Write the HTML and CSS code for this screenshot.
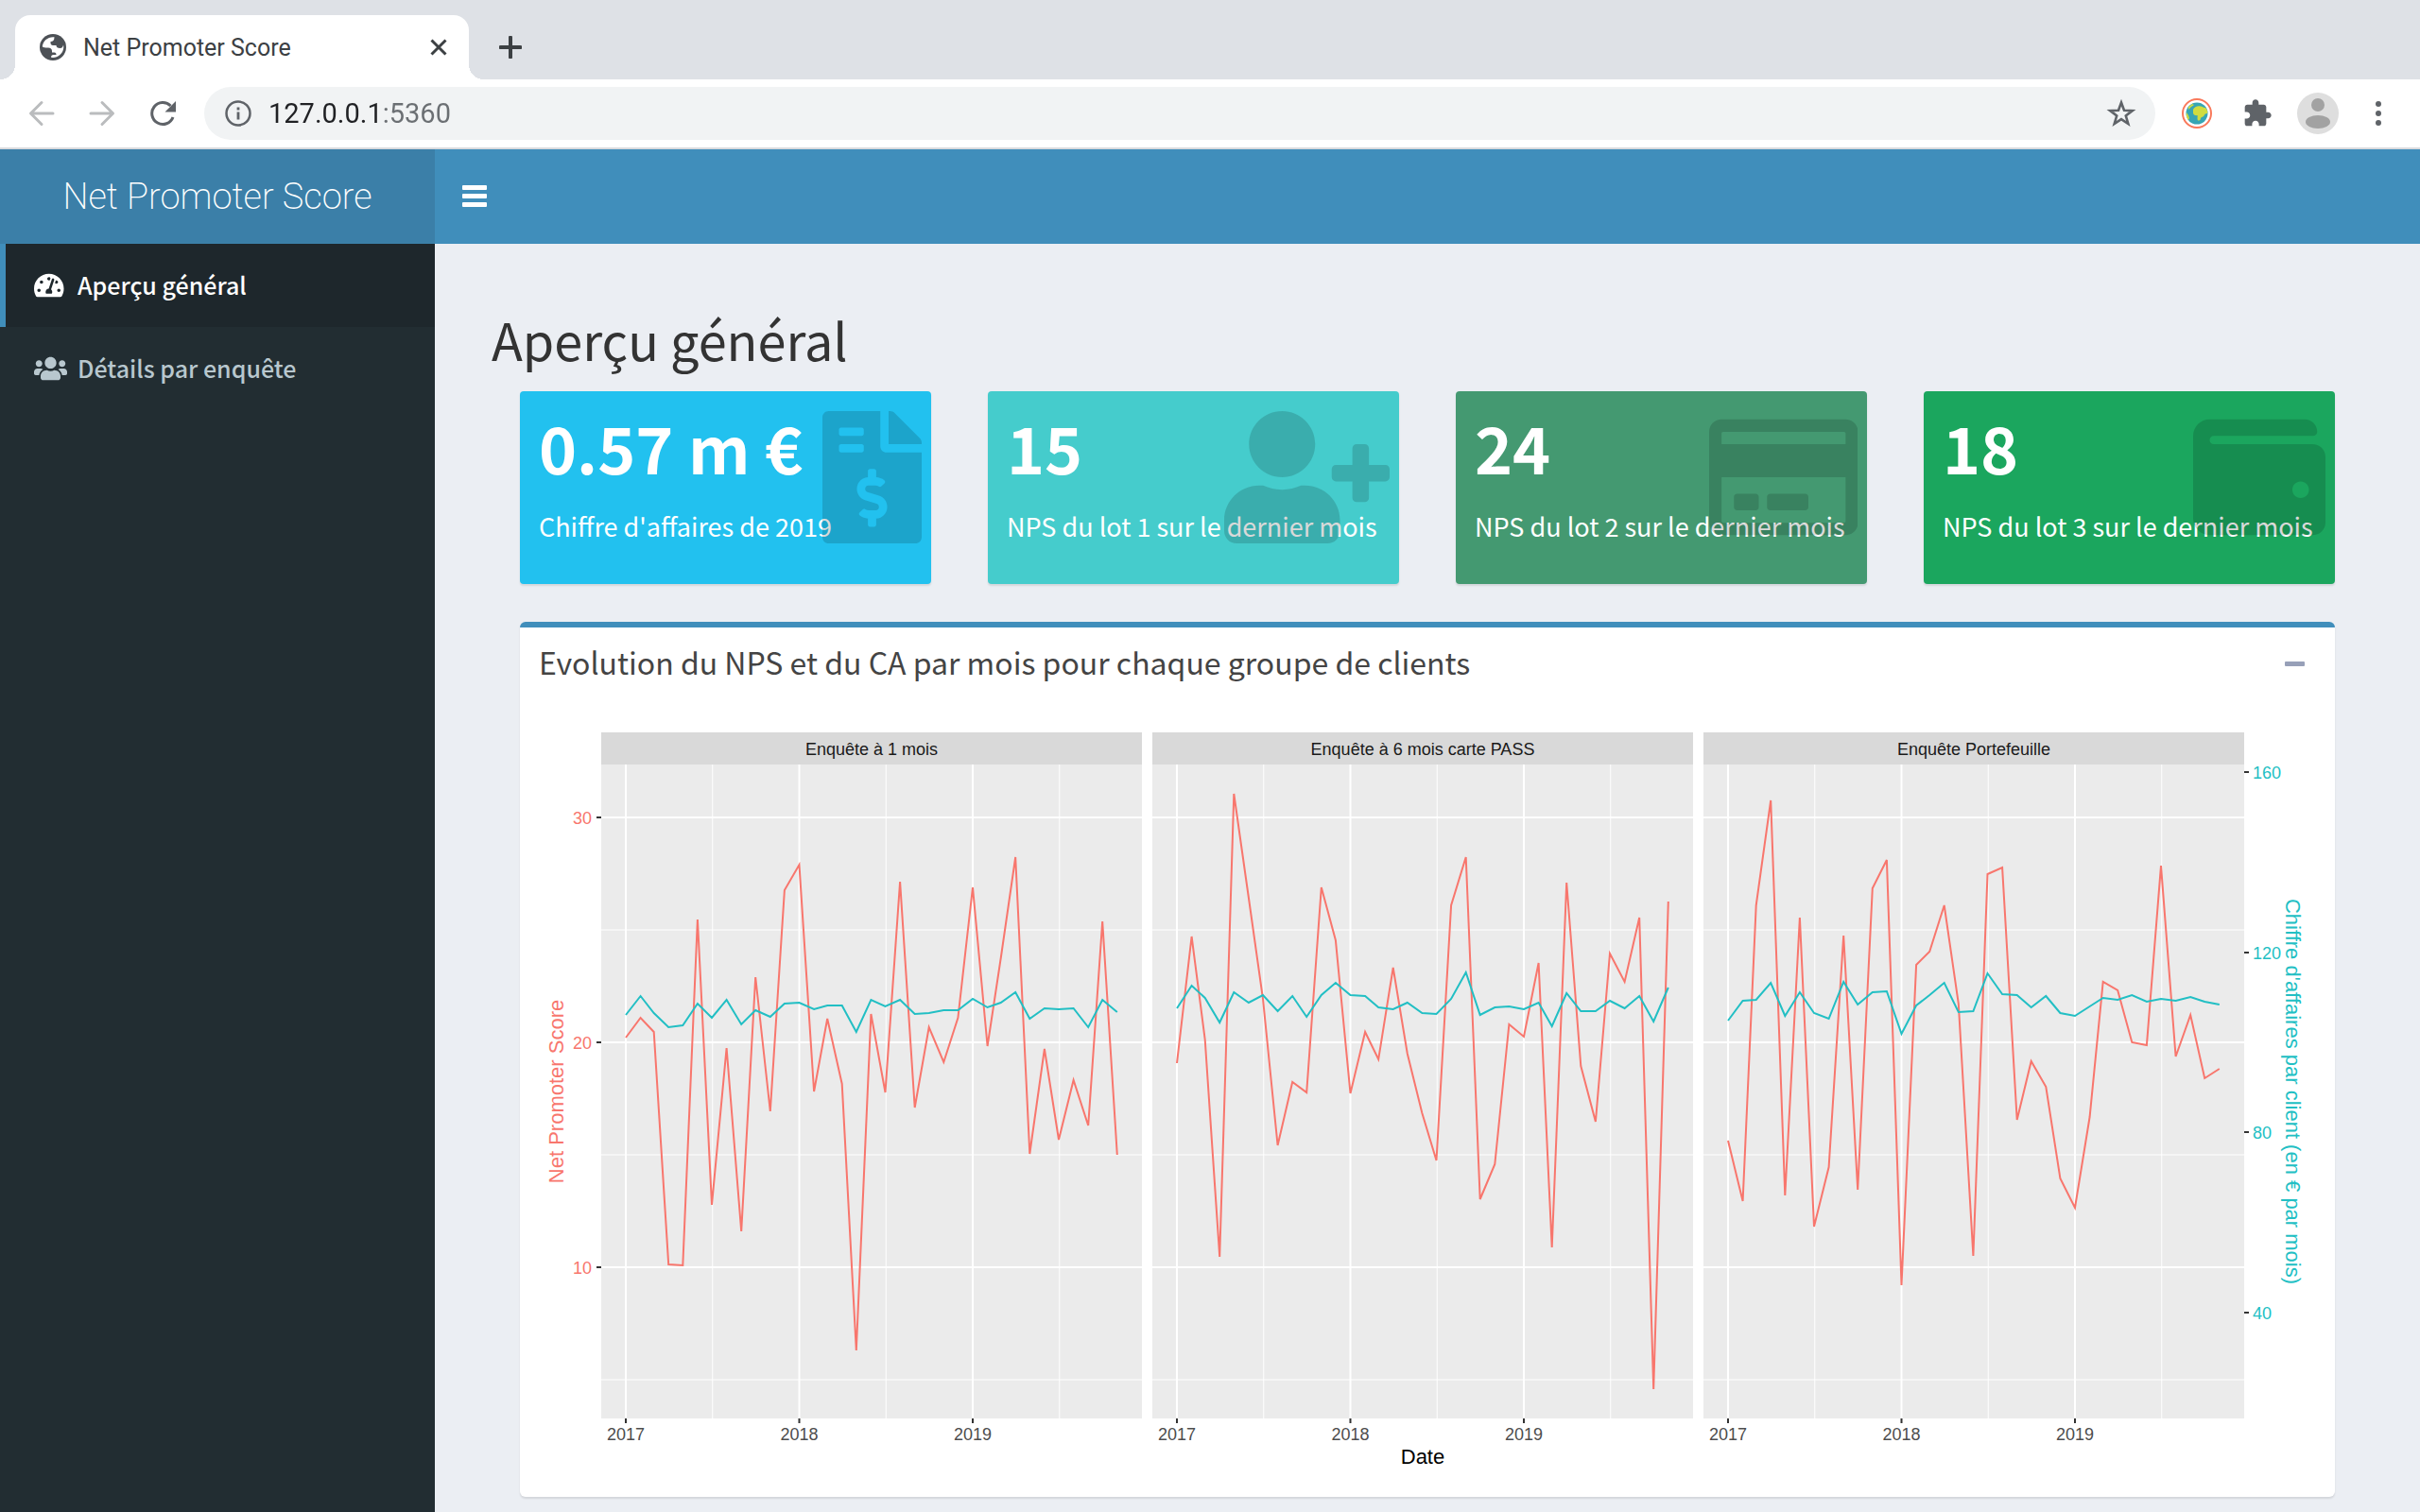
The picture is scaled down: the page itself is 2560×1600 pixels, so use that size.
FILE: index.html
```html
<!DOCTYPE html>
<html lang="fr">
<head>
<meta charset="utf-8">
<title>Net Promoter Score</title>
<link rel="stylesheet" href="styles.css">
</head>
<body>
<div class="browser">
  <div class="tabstrip">
    <div class="tab">
      <svg class="tab-icon" viewBox="0 0 28 28" aria-hidden="true"><circle cx="14" cy="14" r="14" fill="#4d5156"/><path fill="#fff" d="M15.500 3.200C9 2.500 3.500 7 2.800 13.200c1.400 1.400 3.500 1.300 6.200 1.300 2.500 0 4 1.500 4 3.500v1.500h2.500c1.500 0 2 1 2 2.500h-3c-1.500 0-2.500 1-2.500 2.800 6.500 1 12.500-3.600 13.200-9.800.2-1.500 0-2.500-.2-3.500-.5 2.500-1.500 3.500-3.500 3.500-2.500 0-4-1-4-3h-3.500c-1.500 0-2.500-1-2.500-2.500V8c2.500 0 4-1.500 4-4.800z"/></svg>
      <span class="tab-title">Net Promoter Score</span>
      <button class="icon-button" aria-label="Fermer l'onglet"><svg width="20" height="20" viewBox="0 0 20 20"><path d="M2.500 2.500l15 15M17.500 2.500l-15 15" stroke="#3c4043" stroke-width="3"/></svg></button>
    </div>
    <button class="icon-button" aria-label="Nouvel onglet"><svg width="24" height="24" viewBox="0 0 24 24"><path d="M12 1.500v21M1.500 12h21" stroke="#3c4043" stroke-width="4" stroke-linecap="round"/></svg></button>
  </div>
  <div class="toolbar">
    <div class="nav-buttons">
      <button class="icon-button" aria-label="Précédent"><svg width="28" height="28" viewBox="0 0 28 28" fill="none" stroke="#babcbe" stroke-width="3" stroke-linecap="round" stroke-linejoin="round"><path d="M26 14H3M14 2.500L2.500 14 14 25.500"/></svg></button>
      <button class="icon-button" aria-label="Suivant"><svg width="28" height="28" viewBox="0 0 28 28" fill="none" stroke="#babcbe" stroke-width="3" stroke-linecap="round" stroke-linejoin="round"><path d="M2 14h23M14 2.500L25.500 14 14 25.500"/></svg></button>
      <button class="icon-button" aria-label="Actualiser"><svg width="28" height="28" viewBox="0 0 28 28"><path d="M25 18A11.500 11.500 0 1 1 22.500 6" fill="none" stroke="#5f6368" stroke-width="3"/><path d="M28 1v11.500H16.500z" fill="#5f6368"/></svg></button>
    </div>
    <div class="omnibox">
      <svg width="28" height="28" viewBox="0 0 28 28" aria-hidden="true"><circle cx="14" cy="14" r="12.500" fill="none" stroke="#5f6368" stroke-width="2.500"/><path d="M14 12.500v8M14 7.500v3" stroke="#5f6368" stroke-width="2.800"/></svg>
      <input class="url" type="text" value="127.0.0.1:5360" aria-label="Adresse">
      <button class="icon-button" aria-label="Ajouter aux favoris"><svg width="32" height="32" viewBox="0 0 32 32"><path d="M16 4.500l3 8.300 8.800.3-7 5.400 2.500 8.500-7.300-4.900L8.700 27l2.500-8.500-7-5.400 8.800-.3z" fill="none" stroke="#5f6368" stroke-width="2.600"/></svg></button>
    </div>
    <div class="extensions">
      <button class="icon-button" aria-label="Ecosia"><svg width="32" height="32" viewBox="0 0 32 32"><circle cx="16" cy="16" r="15" fill="#fff" stroke="#f9795b" stroke-width="2"/><circle cx="16" cy="16" r="11.500" fill="#36a5b4"/><path fill="#cfdc40" d="M12 12c1-3 5-4.500 8-3.500 2 0 3 2 5 1.500 2 2 2.500 4 2 6-2 0-3 1-3.500 2.500s-3 1-3.500 2.500 0 3-3 2.500c-1-2 0-4-.500-5.500-2 .500-4.500-.500-4.500-2.500zM7 9l4-3 2 1-3 2-3 3zM5 15l2 3 1 3-1 2c-2-2-2.500-5-2-8z"/></svg></button>
      <button class="icon-button" aria-label="Extensions"><svg width="32" height="32" viewBox="0 0 24 24"><path fill="#5f6368" d="M20.500 11H19V7c0-1.100-.900-2-2-2h-4V3.500C13 2.120 11.880 1 10.500 1S8 2.120 8 3.500V5H4c-1.100 0-1.990.900-1.990 2v3.800H3.500c1.490 0 2.700 1.210 2.700 2.700s-1.210 2.700-2.700 2.700H2V20c0 1.100.900 2 2 2h3.800v-1.500c0-1.490 1.210-2.700 2.700-2.700 1.490 0 2.700 1.210 2.700 2.700V22H17c1.100 0 2-.900 2-2v-4h1.500c1.380 0 2.500-1.120 2.500-2.500S21.880 11 20.500 11z"/></svg></button>
      <button class="icon-button profile" aria-label="Profil"><svg width="44" height="44" viewBox="0 0 44 44"><circle cx="22" cy="22" r="22" fill="#dedede"/><circle cx="22" cy="13" r="7" fill="#a2a2a2"/><ellipse cx="22" cy="31" rx="13" ry="7" fill="#a2a2a2"/></svg></button>
      <button class="icon-button" aria-label="Menu"><svg width="32" height="32" viewBox="0 0 32 32" fill="#5f6368"><circle cx="16" cy="6" r="3"/><circle cx="16" cy="16" r="3"/><circle cx="16" cy="26" r="3"/></svg></button>
    </div>
  </div>
</div>

<div class="app">
  <header class="app-header">
    <a class="logo" href="#">Net Promoter Score</a>
    <button class="icon-button sidebar-toggle" aria-label="Afficher le menu"><svg width="26" height="30" viewBox="0 0 26 30" fill="#fff"><rect y="3" width="26" height="5" rx="1"/><rect y="12" width="26" height="5" rx="1"/><rect y="21" width="26" height="5" rx="1"/></svg></button>
  </header>
  <div class="app-body">
    <nav class="sidebar">
      <a class="menu-item menu-item-active" href="#apercu">
        <svg class="menu-icon" viewBox="0 0 640 512" preserveAspectRatio="xMinYMid" aria-hidden="true"><path d="M288 32C128.940 32 0 160.940 0 320c0 52.800 14.250 102.260 39.060 144.800 5.610 9.620 16.300 15.200 27.440 15.200h443c11.140 0 21.830-5.580 27.440-15.200C561.750 422.260 576 372.800 576 320c0-159.060-128.940-288-288-288zm0 64c14.710 0 26.580 10.130 30.320 23.650-1.110 2.260-2.640 4.230-3.450 6.670l-9.220 27.670c-5.130 3.490-10.970 6.010-17.640 6.010-17.670 0-32-14.330-32-32S270.330 96 288 96zM96 384c-17.670 0-32-14.330-32-32s14.330-32 32-32 32 14.330 32 32-14.330 32-32 32zm48-160c-17.670 0-32-14.330-32-32s14.330-32 32-32 32 14.330 32 32-14.330 32-32 32zm246.770-72.410l-61.330 184C343.130 347.330 352 364.540 352 384c0 11.720-3.380 22.550-8.880 32H232.880c-5.500-9.450-8.880-20.280-8.880-32 0-33.940 26.500-61.430 59.900-63.590l61.340-184.010c4.170-12.560 17.730-19.450 30.360-15.170 12.570 4.190 19.350 17.790 15.170 30.360zm14.660 57.200l15.520-46.550c3.470-1.290 7.130-2.230 11.050-2.230 17.670 0 32 14.330 32 32s-14.330 32-32 32c-11.380-.010-20.890-6.280-26.570-15.220zM480 384c-17.670 0-32-14.330-32-32s14.330-32 32-32 32 14.330 32 32-14.330 32-32 32z"/></svg>
        <span class="menu-text">Aperçu général</span>
      </a>
      <a class="menu-item" href="#details">
        <svg class="menu-icon" viewBox="0 0 640 512" preserveAspectRatio="xMinYMid" aria-hidden="true"><path d="M96 224c35.300 0 64-28.700 64-64s-28.700-64-64-64-64 28.700-64 64 28.700 64 64 64zm448 0c35.300 0 64-28.700 64-64s-28.700-64-64-64-64 28.700-64 64 28.700 64 64 64zm32 32h-64c-17.600 0-33.500 7.100-45.100 18.600 40.300 22.100 68.900 62 75.100 109.400h66c17.700 0 32-14.300 32-32v-32c0-35.300-28.700-64-64-64zm-256 0c61.900 0 112-50.100 112-112S381.900 32 320 32 208 82.100 208 144s50.100 112 112 112zm76.800 32h-8.300c-20.800 10-43.900 16-68.500 16s-47.600-6-68.500-16h-8.300C179.600 288 128 339.600 128 403.200V432c0 26.500 21.500 48 48 48h288c26.500 0 48-21.500 48-48v-28.800c0-63.600-51.600-115.200-115.200-115.200zm-223.700-13.400C161.500 263.100 145.600 256 128 256H64c-35.300 0-64 28.700-64 64v32c0 17.700 14.300 32 32 32h65.900c6.300-47.400 34.900-87.300 75.200-109.400z"/></svg>
        <span class="menu-text">Détails par enquête</span>
      </a>
    </nav>
    <main class="content">
      <h2 class="page-title">Aperçu général</h2>
      <div class="panels">
        <div class="cards">
          <section class="card card-aqua">
            <h3 class="card-value">0.57 m €</h3>
            <p class="card-label">Chiffre d'affaires de 2019</p>
            <svg class="card-icon" viewBox="0 0 384 512" aria-hidden="true"><path d="M377 105L279.100 7c-4.500-4.500-10.600-7-17-7H256v128h128v-6.100c0-6.300-2.500-12.400-7-16.900zm-153 31V0H24C10.700 0 0 10.700 0 24v464c0 13.300 10.700 24 24 24h336c13.300 0 24-10.700 24-24V160H248c-13.200 0-24-10.800-24-24zM64 72c0-4.420 3.580-8 8-8h80c4.420 0 8 3.580 8 8v16c0 4.420-3.580 8-8 8H72c-4.420 0-8-3.580-8-8V72zm0 80v-16c0-4.420 3.580-8 8-8h80c4.420 0 8 3.580 8 8v16c0 4.420-3.580 8-8 8H72c-4.420 0-8-3.580-8-8zm144 263.880V440c0 4.420-3.580 8-8 8h-16c-4.420 0-8-3.580-8-8v-24.290c-11.290-.580-22.270-4.520-31.370-11.350-3.900-2.930-4.100-8.770-.570-12.140l11.750-11.210c2.770-2.640 6.890-2.760 10.130-.730 3.870 2.420 8.260 3.720 12.820 3.720h28.110c6.500 0 11.800-5.920 11.800-13.190 0-5.950-3.610-11.190-8.770-12.730l-45-13.500c-18.590-5.580-31.580-23.420-31.580-43.390 0-24.520 19.050-44.440 42.670-45.070V232c0-4.420 3.580-8 8-8h16c4.420 0 8 3.580 8 8v24.290c11.290.580 22.270 4.510 31.370 11.350 3.900 2.930 4.100 8.770.570 12.140l-11.750 11.210c-2.770 2.640-6.890 2.760-10.130.730-3.870-2.430-8.260-3.720-12.820-3.720h-28.110c-6.500 0-11.800 5.920-11.800 13.190 0 5.950 3.610 11.190 8.770 12.730l45 13.500c18.590 5.580 31.580 23.420 31.580 43.390 0 24.530-19.050 44.440-42.670 45.070z"/></svg>
          </section>
          <section class="card card-teal">
            <h3 class="card-value">15</h3>
            <p class="card-label">NPS du lot 1 sur le dernier mois</p>
            <svg class="card-icon" viewBox="0 0 640 512" aria-hidden="true"><path d="M624 208h-64v-64c0-8.800-7.200-16-16-16h-32c-8.800 0-16 7.200-16 16v64h-64c-8.800 0-16 7.200-16 16v32c0 8.800 7.200 16 16 16h64v64c0 8.800 7.200 16 16 16h32c8.800 0 16-7.200 16-16v-64h64c8.800 0 16-7.200 16-16v-32c0-8.800-7.200-16-16-16zm-400 48c70.700 0 128-57.300 128-128S294.700 0 224 0 96 57.300 96 128s57.300 128 128 128zm89.600 32h-16.700c-22.200 10.200-46.900 16-72.900 16s-50.600-5.800-72.900-16h-16.700C60.200 288 0 348.200 0 422.400V464c0 26.500 21.500 48 48 48h352c26.500 0 48-21.500 48-48v-41.600c0-74.200-60.200-134.400-134.400-134.400z"/></svg>
          </section>
          <section class="card card-olive">
            <h3 class="card-value">24</h3>
            <p class="card-label">NPS du lot 2 sur le dernier mois</p>
            <svg class="card-icon" viewBox="0 0 576 512" aria-hidden="true"><path d="M527.900 32H48.100C21.500 32 0 53.500 0 80v352c0 26.500 21.500 48 48.100 48h479.800c26.600 0 48.100-21.500 48.100-48V80c0-26.500-21.500-48-48.100-48zM54.100 80h467.800c3.300 0 6 2.700 6 6v42H48.100V86c0-3.300 2.700-6 6-6zm467.800 352H54.100c-3.300 0-6-2.700-6-6V256h479.800v170c0 3.300-2.700 6-6 6zM192 332v40c0 6.600-5.400 12-12 12h-72c-6.600 0-12-5.400-12-12v-40c0-6.600 5.400-12 12-12h72c6.600 0 12 5.400 12 12zm192 0v40c0 6.600-5.400 12-12 12H236c-6.600 0-12-5.400-12-12v-40c0-6.600 5.400-12 12-12h136c6.600 0 12 5.400 12 12z"/></svg>
          </section>
          <section class="card card-green">
            <h3 class="card-value">18</h3>
            <p class="card-label">NPS du lot 3 sur le dernier mois</p>
            <svg class="card-icon" viewBox="0 0 512 512" aria-hidden="true"><path d="M461.200 128H80c-8.840 0-16-7.160-16-16s7.160-16 16-16h384c8.840 0 16-7.160 16-16 0-26.510-21.490-48-48-48H64C28.650 32 0 60.650 0 96v320c0 35.350 28.650 64 64 64h397.200c28.020 0 50.800-21.530 50.800-48V176c0-26.470-22.780-48-50.800-48zM416 336c-17.670 0-32-14.330-32-32s14.330-32 32-32 32 14.330 32 32-14.330 32-32 32z"/></svg>
          </section>
        </div>
        <section class="box">
          <div class="box-header">
            <h3 class="box-title">Evolution du NPS et du CA par mois pour chaque groupe de clients</h3>
            <button class="icon-button collapse" aria-label="Réduire"><svg width="21" height="5" viewBox="0 0 21 5"><rect width="21" height="5" rx="1" fill="#97a0b8"/></svg></button>
          </div>
          <div class="box-body">
            <svg id="plot" class="plot" viewBox="0 0 1880 800" role="img" aria-label="NPS et chiffre d'affaires par mois"></svg>
          </div>
        </section>
      </div>
    </main>
  </div>
</div>
<script src="plot.js"></script>
</body>
</html>
```
FILE: styles.css
```css
* {
  box-sizing: border-box;
}

body {
  margin: 0;
  min-height: 100vh;
  display: flex;
  flex-direction: column;
  font-family: "Noto Sans CJK SC", "Noto Sans", sans-serif;
  color: #333;
  background: #ebeef3;
}

h2, h3, p {
  margin: 0;
  font-weight: 400;
}

a {
  text-decoration: none;
}

svg {
  display: block;
}

.icon-button {
  display: flex;
  padding: 0;
  border: 0;
  background: none;
  cursor: pointer;
}

/* Browser frame */
.browser {
  font-family: Roboto, sans-serif;
  border-bottom: 2px solid #d9dadd;
}

.tabstrip {
  display: flex;
  align-items: center;
  gap: 32px;
  height: 84px;
  padding: 16px 16px 0;
  background: #dee1e6;
}

.tab {
  position: relative;
  display: flex;
  align-items: center;
  gap: 18px;
  width: 480px;
  height: 68px;
  padding: 0 22px 0 26px;
  border-radius: 16px 16px 0 0;
  background: #fff;
}

.tab::before,
.tab::after {
  content: "";
  position: absolute;
  bottom: 0;
  width: 16px;
  height: 16px;
}

.tab::before {
  right: 100%;
  background: radial-gradient(circle at 0 0, #dee1e6 16px, #fff 16px);
}

.tab::after {
  left: 100%;
  background: radial-gradient(circle at 100% 0, #dee1e6 16px, #fff 16px);
}

.tab-icon {
  width: 28px;
  height: 28px;
}

.tab-title {
  flex: 1;
  font-size: 25px;
  color: #3c4043;
}

.toolbar {
  display: flex;
  align-items: center;
  height: 72px;
  padding: 0 28px 0 30px;
  background: #fff;
}

.nav-buttons {
  display: flex;
  gap: 36px;
  margin-right: 30px;
}

.omnibox {
  flex: 1;
  display: flex;
  align-items: center;
  gap: 18px;
  height: 56px;
  padding: 0 20px 0 22px;
  border-radius: 28px;
  background: #f1f3f4;
}

.url {
  flex: 1;
  min-width: 0;
  padding: 0;
  border: 0;
  font: 29px/40px Roboto, sans-serif;
  color: transparent;
  background: linear-gradient(90deg, #202124 120px, #6b6f73 120px);
  background-clip: text;
}

.extensions {
  display: flex;
  align-items: center;
  gap: 32px;
  margin-left: 28px;
}

.profile {
  margin: 0 -6px;
}

/* Dashboard header */
.app {
  flex: 1;
  display: flex;
  flex-direction: column;
}

.app-header {
  display: flex;
  height: 100px;
  background: #408ebb;
}

.logo {
  width: 460px;
  font: 200 38px/100px Roboto, "Liberation Sans", sans-serif;
  text-align: center;
  color: #fff;
  background: #3b7fa8;
}

.sidebar-toggle {
  align-items: center;
  padding: 0 29px;
}

.app-body {
  flex: 1;
  display: flex;
}

/* Sidebar */
.sidebar {
  width: 460px;
  background: #222d32;
}

.menu-item {
  display: flex;
  align-items: center;
  gap: 10px;
  height: 88px;
  padding-left: 30px;
  border-left: 6px solid transparent;
  font-size: 25px;
  font-weight: 500;
  color: #b8c7ce;
}

.menu-item-active {
  color: #fff;
  background: #1e272c;
  border-left-color: #408ebb;
}

.menu-icon {
  width: 36px;
  height: 28px;
  fill: currentColor;
}

.menu-text {
  padding-bottom: 3px;
}

/* Content */
.content {
  flex: 1;
  min-width: 0;
  padding: 68px 60px 16px;
}

.page-title {
  margin-bottom: 22px;
  font-size: 54px;
  line-height: 66px;
}

.panels {
  display: flex;
  flex-direction: column;
  gap: 40px;
  padding: 0 30px;
}

.cards {
  display: grid;
  grid-template-columns: repeat(4, 1fr);
  gap: 60px;
}

.card {
  position: relative;
  padding: 21px 20px 41px;
  border-radius: 4px;
  color: #fff;
  box-shadow: 0 2px 2px rgba(0, 0, 0, .1);
}

.card-aqua { background: #22c1ef; }
.card-teal { background: #45cccc; }
.card-olive { background: #449971; }
.card-green { background: #1ba65e; }

.card-value {
  margin-bottom: 26px;
  font-size: 68px;
  font-weight: 700;
  line-height: 76px;
}

.card-label {
  font-size: 27px;
  line-height: 40px;
  white-space: nowrap;
}

.card-icon {
  position: absolute;
  top: 21px;
  right: 10px;
  height: 140px;
  fill: rgba(0, 0, 0, .15);
}

.box {
  border-top: 6px solid #408ebb;
  border-radius: 6px;
  background: #fff;
  box-shadow: 0 2px 2px rgba(0, 0, 0, .1);
}

.box-header {
  display: flex;
  justify-content: space-between;
  align-items: center;
  padding: 16px 32px 24px 20px;
}

.box-title {
  font-size: 32px;
  line-height: 40px;
  color: #444;
}

.collapse {
  padding-top: 4px;
}

.box-body {
  padding: 20px;
}

/* Plot */
.plot {
  width: 100%;
  height: auto;
  font-family: "Liberation Sans", Arial, sans-serif;
  font-size: 18px;
}

.strip { fill: #d9d9d9; }
.panel { fill: #ebebeb; }
.grid-major { stroke: #fff; stroke-width: 2; }
.grid-minor { stroke: #fff; stroke-width: 1; }
.tick { stroke: #333; stroke-width: 2; }
.series { fill: none; stroke-width: 2; }
.series-nps { stroke: #f8766d; }
.series-ca { stroke: #22bfc4; }
.text-strip { fill: #1a1a1a; }
.text-date { fill: #4d4d4d; }
.text-nps { fill: #f8766d; }
.text-ca { fill: #22bfc4; }
.axis-title { font-size: 22px; }
```
FILE: plot.js
```js
const NS = "http://www.w3.org/2000/svg";
const plot = document.getElementById("plot");

const TOP = 45, BOTTOM = 737, WIDTH = 572, STEP = 583, LEFT = 66;
const YEAR = 183.5, START = 26;

// Monthly heights of both series, January 2017 to November 2019
const facets = [
  {
    name: "Enquête à 1 mois",
    nps: [334,313,328,574,575,209,511,345,539,270,412,178,151,391,314,383,665,309,392,169,408,323,360,313,175,343,250,143,457,346,442,379,427,211,458],
    ca: [310,290,308,323,321,298,313,294,320,305,312,298,297,304,300,300,328,294,301,294,309,308,305,305,293,302,297,286,314,303,304,303,323,294,307]
  },
  {
    name: "Enquête à 6 mois carte PASS",
    nps: [361,227,336,566,76,186,293,448,381,392,175,231,393,328,357,260,351,414,464,194,143,505,468,320,333,255,556,170,364,423,245,275,207,706,190],
    ca: [303,279,292,318,286,297,289,306,290,312,289,276,289,290,302,304,297,308,309,293,265,310,302,301,304,297,322,287,306,306,295,303,290,317,281]
  },
  {
    name: "Enquête Portefeuille",
    nps: [443,507,194,83,501,207,534,471,226,495,176,146,596,257,243,194,298,565,161,154,421,359,386,483,514,418,275,284,339,342,152,354,310,377,367],
    ca: [316,295,294,276,311,286,308,314,275,299,286,285,330,300,289,276,307,306,266,288,289,302,290,308,311,301,292,294,289,296,293,295,291,296,299]
  }
];

function add(tag, attrs, text) {
  const node = document.createElementNS(NS, tag);
  for (const key in attrs) node.setAttribute(key, attrs[key]);
  if (text) node.textContent = text;
  plot.appendChild(node);
}

function line(cls, x1, y1, x2, y2) {
  add("line", { class: cls, x1, y1, x2, y2 });
}

function monthX(i) {
  const days = (Date.UTC(2017, i, 1) - Date.UTC(2017, 0, 1)) / 86400000;
  return START + days * YEAR / 365;
}

facets.forEach((facet, n) => {
  const x0 = LEFT + n * STEP;
  const points = ys => ys.map((y, i) => (x0 + monthX(i)).toFixed(1) + "," + y).join(" ");

  add("rect", { class: "strip", x: x0, y: 11, width: WIDTH, height: 34 });
  add("rect", { class: "panel", x: x0, y: TOP, width: WIDTH, height: BOTTOM - TOP });
  add("text", { class: "text-strip", x: x0 + WIDTH / 2, y: 35, "text-anchor": "middle" }, facet.name);

  [220, 458, 696].forEach(y => line("grid-minor", x0, y, x0 + WIDTH, y));
  [0.5, 1.5, 2.5].forEach(t => line("grid-minor", x0 + START + t * YEAR, TOP, x0 + START + t * YEAR, BOTTOM));
  [101, 339, 577].forEach(y => line("grid-major", x0, y, x0 + WIDTH, y));
  [0, 1, 2].forEach(t => {
    const x = x0 + START + t * YEAR;
    line("grid-major", x, TOP, x, BOTTOM);
    line("tick", x, BOTTOM, x, BOTTOM + 5);
    add("text", { class: "text-date", x, y: 760, "text-anchor": "middle" }, String(2017 + t));
  });

  add("polyline", { class: "series series-nps", points: points(facet.nps) });
  add("polyline", { class: "series series-ca", points: points(facet.ca) });
});

[[30, 101], [20, 339], [10, 577]].forEach(([label, y]) => {
  line("tick", LEFT - 5, y, LEFT, y);
  add("text", { class: "text-nps", x: 56, y: y + 7, "text-anchor": "end" }, String(label));
});

[[160, 53], [120, 244], [80, 434], [40, 625]].forEach(([label, y]) => {
  line("tick", 1804, y, 1809, y);
  add("text", { class: "text-ca", x: 1813, y: y + 7 }, String(label));
});

add("text", { class: "axis-title", x: LEFT + STEP + WIDTH / 2, y: 785, "text-anchor": "middle" }, "Date");
add("text", { class: "axis-title text-nps", transform: "translate(26 391) rotate(-90)", "text-anchor": "middle" }, "Net Promoter Score");
add("text", { class: "axis-title text-ca", transform: "translate(1848 391) rotate(90)", "text-anchor": "middle" }, "Chiffre d'affaires par client (en € par mois)");
```
